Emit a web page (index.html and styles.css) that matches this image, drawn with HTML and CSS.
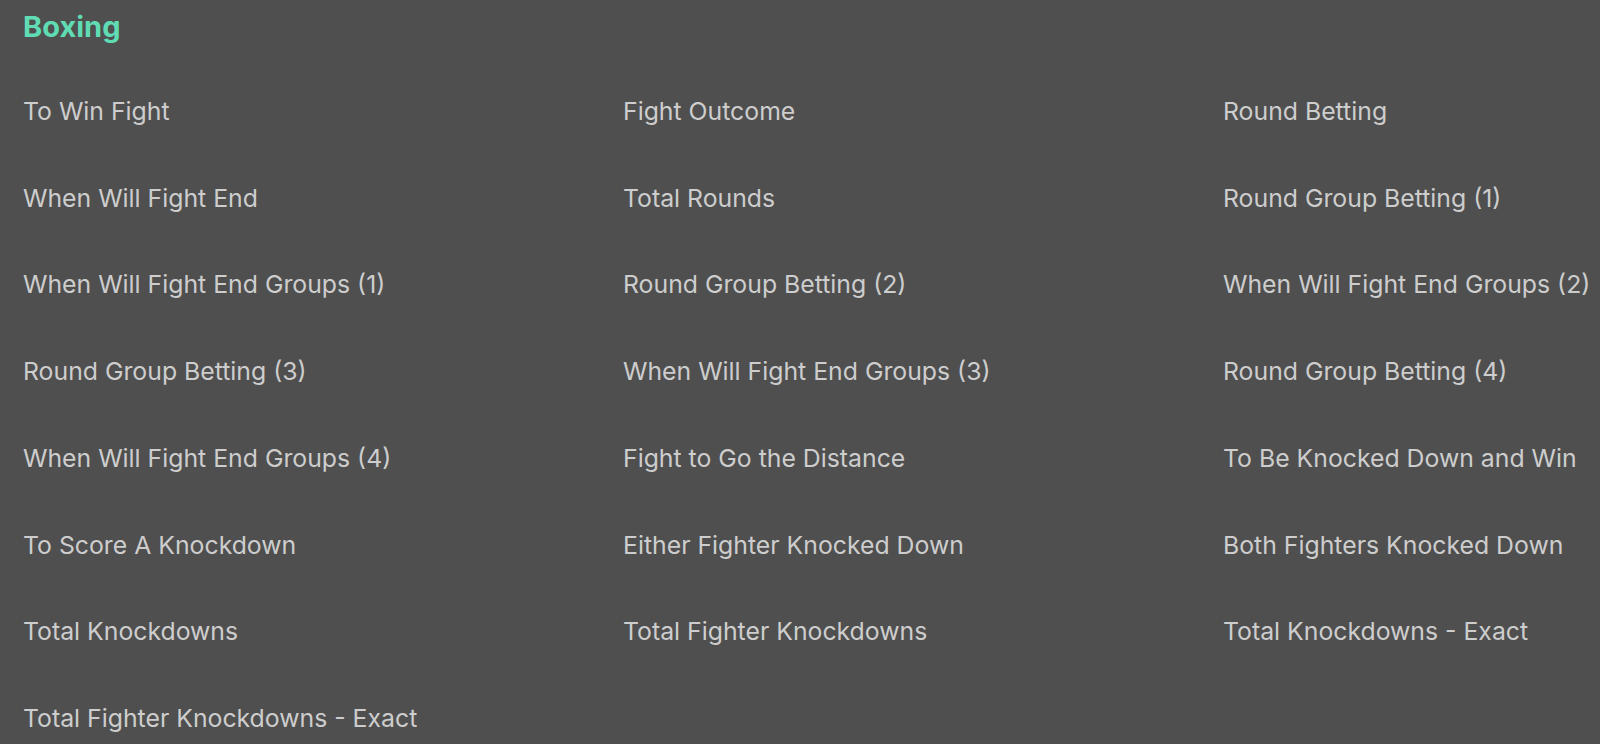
FILE: index.html
```html
<!DOCTYPE html>
<html lang="en">
<head>
<meta charset="utf-8">
<title>Boxing</title>
<link rel="stylesheet" href="styles.css">
</head>
<body>
<main class="page">
  <h1 class="title">Boxing</h1>
  <ul class="markets">
    <li class="market">To Win Fight</li>
    <li class="market">Fight Outcome</li>
    <li class="market">Round Betting</li>
    <li class="market">When Will Fight End</li>
    <li class="market">Total Rounds</li>
    <li class="market">Round Group Betting (1)</li>
    <li class="market">When Will Fight End Groups (1)</li>
    <li class="market">Round Group Betting (2)</li>
    <li class="market">When Will Fight End Groups (2)</li>
    <li class="market">Round Group Betting (3)</li>
    <li class="market">When Will Fight End Groups (3)</li>
    <li class="market">Round Group Betting (4)</li>
    <li class="market">When Will Fight End Groups (4)</li>
    <li class="market">Fight to Go the Distance</li>
    <li class="market">To Be Knocked Down and Win</li>
    <li class="market">To Score A Knockdown</li>
    <li class="market">Either Fighter Knocked Down</li>
    <li class="market">Both Fighters Knocked Down</li>
    <li class="market">Total Knockdowns</li>
    <li class="market">Total Fighter Knockdowns</li>
    <li class="market">Total Knockdowns - Exact</li>
    <li class="market">Total Fighter Knockdowns - Exact</li>
  </ul>
</main>
</body>
</html>
```
FILE: styles.css
```css
html, body {
  margin: 0;
  padding: 0;
  background: #4f4f4f;
  overflow: hidden;
}

.page {
  padding: 7px 0 0 23px;
  font-family: Inter, "Noto Sans", sans-serif;
}

.title {
  margin: 0 0 21px 0;
  font-size: 29px;
  line-height: 40px;
  font-weight: 700;
  color: #5fdcb3;
}

.markets {
  list-style: none;
  margin: 0;
  padding: 0;
  display: grid;
  grid-template-columns: repeat(3, 600px);
}

.market {
  font-size: 24.8px;
  line-height: 86.7px;
  color: #cdcdcd;
  white-space: nowrap;
}
```
